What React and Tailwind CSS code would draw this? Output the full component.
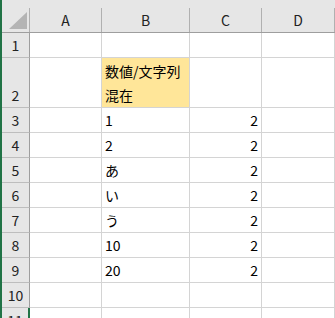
import React from 'react';

const rows = [
    { n: 1, h: 'h-[25px]', b: '', c: '' },
    { n: 2, h: 'h-[50px]', b: '数値/文字列\n混在', c: '', fill: true },
    { n: 3, h: 'h-[25px]', b: '1', c: '2' },
    { n: 4, h: 'h-[25px]', b: '2', c: '2' },
    { n: 5, h: 'h-[25px]', b: 'あ', c: '2' },
    { n: 6, h: 'h-[25px]', b: 'い', c: '2' },
    { n: 7, h: 'h-[25px]', b: 'う', c: '2' },
    { n: 8, h: 'h-[25px]', b: '10', c: '2' },
    { n: 9, h: 'h-[25px]', b: '20', c: '2' },
    { n: 10, h: 'h-[25px]', b: '', c: '' },
    { n: 11, h: 'h-[25px]', b: '', c: '', last: true },
];

const Row = ({ row }) => (
    <div className={`flex shrink-0 ${row.h}`}>
        <div
            className={`w-[28px] flex items-end justify-center bg-[#e6e6e6] border-b border-b-[#bdbdbd] border-r ${
                row.last ? 'border-r-2 w-[28px] border-r-[#217346]' : 'border-r-[#9e9e9e]'
            } text-[#222] leading-[24px]`}
        >
            {row.n}
        </div>
        <div className="w-[72px] border-b border-r border-[#d4d4d4]" />
        <div
            className={`w-[88px] border-b border-r border-[#d4d4d4] flex items-end pl-[3px] text-black leading-[24px] whitespace-pre-line ${
                row.fill ? 'bg-[#ffe699]' : ''
            }`}
        >
            {row.b}
        </div>
        <div className="w-[72px] border-b border-r border-[#d4d4d4] flex items-end justify-end pr-[3px] text-black leading-[24px]">
            {row.c}
        </div>
        <div className="w-[73px] border-b border-r border-[#d4d4d4]" />
    </div>
);

const App = () => {
    return (
        <div className="w-[335px] h-[318px] overflow-hidden bg-white border-l-2 border-[#217346] flex flex-col font-['Noto_Sans_CJK_JP',sans-serif] text-[14px]">
            <div className="h-[8px] shrink-0 bg-[#e6e6e6]" />
            <div className="h-[25px] shrink-0 flex bg-[#e6e6e6] border-b border-[#9e9e9e] text-[#222]">
                <div className="w-[28px] border-r border-[#b0b0b0] flex items-end justify-end pr-[2px] pb-[3px]">
                    <svg width="18" height="17" viewBox="0 0 18 17">
                        <polygon points="18,0 18,17 0,17" fill="#b4b4b4" />
                    </svg>
                </div>
                <div className="w-[72px] border-r border-[#b0b0b0] flex items-center justify-center">A</div>
                <div className="w-[88px] border-r border-[#b0b0b0] flex items-center justify-center">B</div>
                <div className="w-[72px] border-r border-[#b0b0b0] flex items-center justify-center">C</div>
                <div className="w-[73px] border-r border-[#b0b0b0] flex items-center justify-center">D</div>
            </div>
            {rows.map((row) => (
                <Row key={row.n} row={row} />
            ))}
        </div>
    );
};

export default App;
